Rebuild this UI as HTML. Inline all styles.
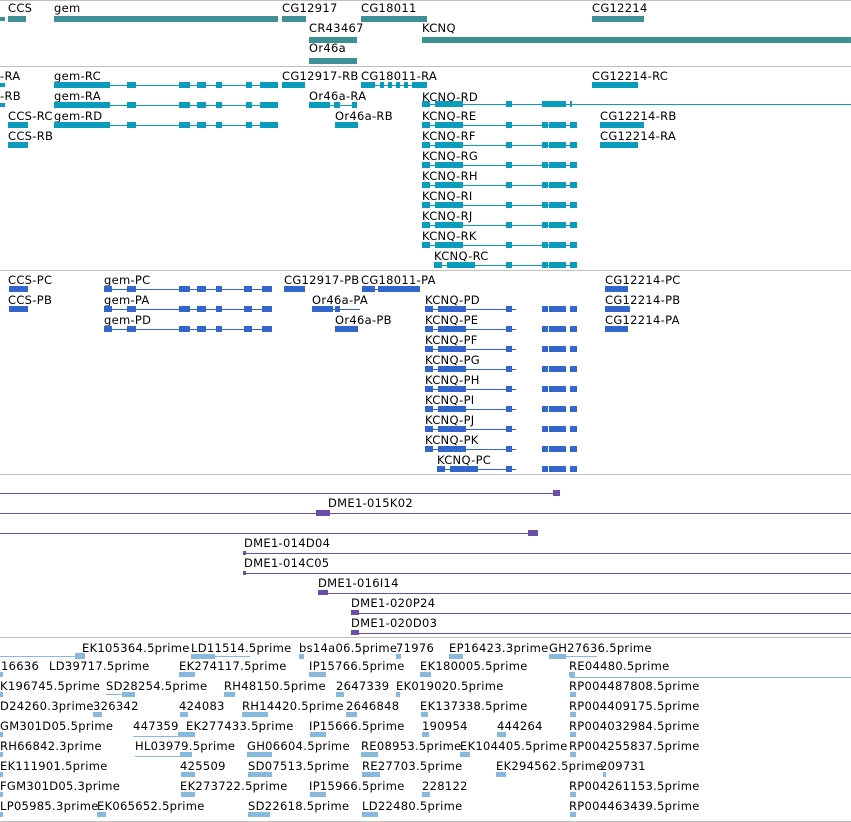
<!DOCTYPE html>
<html><head><meta charset="utf-8"><style>
html,body{margin:0;padding:0;background:#fff;width:851px;height:822px;overflow:hidden;position:relative}
.t{position:absolute;font-family:"DejaVu Sans","Liberation Sans",sans-serif;font-size:11.5px;line-height:13px;color:#000;white-space:nowrap;letter-spacing:0.3px}
.b{position:absolute}
</style></head><body>
<script>
function T(x,y,s){document.write('<div class="t" style="left:'+x+'px;top:'+y+'px">'+s+'</div>');}
function B(x,y,w,h,c){document.write('<div class="b" style="left:'+x+'px;top:'+y+'px;width:'+w+'px;height:'+h+'px;background:'+c+'"></div>');}
function L(x1,x2,y,c){B(x1,y,x2-x1,1,c);}
function EX(arr,y,c,h){h=h||6;arr.forEach(function(e){B(e[0],y-h/2,e[1]-e[0],h,c);});}
var G='#c0c0c0';
// separators
[0,66,270,474,637,821].forEach(function(y){L(0,851,y,G);});
// gene track
var g='#3e8f96';
T(8,2,'CCS');B(0,17,5,4,g);B(8,16,18,6,g);
T(54,2,'gem');B(54,16,224,6,g);
T(282,2,'CG12917');B(282,16,24,6,g);
T(361,2,'CG18011');B(361,16,66,6,g);
T(592,2,'CG12214');B(592,16,52,6,g);
T(309,22,'CR43467');B(309,37,48,6,g);
T(422,22,'KCNQ');B(422,37,429,6,g);
T(309,42,'Or46a');B(309,58,48,6,g);
// transcripts
var c='#0a9cbd';
function gemRow(x0,y,col,x1){L(x0,278,y,col);EX([[x0,x1],[127,136],[179,190],[197,206],[216,222],[246,252],[260,278]],y,col);}
function kcnq(x0,y,col,xe){L(x0,xe,y,col);EX([[x0,x0+8],[x0+13,x0+41],[506,512],[542,548],[549,566],[570,577]],y,col);}
T(0,70,'-RA');B(0,83,5,4,c);
T(54,70,'gem-RC');gemRow(54,85,c,110);
T(282,70,'CG12917-RB');EX([[282,305]],85,c);
T(361,70,'CG18011-RA');L(361,427,85,c);EX([[361,375],[380,384],[388,392],[396,400],[404,408],[412,427]],85,c);
T(592,70,'CG12214-RC');B(592,82,46,6,c);
T(0,90,'-RB');B(0,103,5,4,c);
T(54,90,'gem-RA');gemRow(54,105,c,110);
T(309,90,'Or46a-RA');L(309,357,105,c);EX([[309,330],[334,340],[352,357]],105,c);
T(422,91,'KCNQ-RD');L(422,851,104,c);EX([[422,430],[435,463],[506,512],[542,566],[570,572]],104,c);
T(8,110,'CCS-RC');EX([[8,28]],125,c);
T(54,110,'gem-RD');gemRow(54,125,c,110);
T(335,110,'Or46a-RB');B(335,122,23,6,c);
var ky=[125,145,165,185,205,225,245];var kn=['RE','RF','RG','RH','RI','RJ','RK'];
for(var i=0;i<7;i++){T(422,ky[i]-15,'KCNQ-'+kn[i]);kcnq(422,ky[i],c,577);}
T(434,250,'KCNQ-RC');kcnq(434,265,c,577);
T(600,110,'CG12214-RB');B(600,122,44,6,c);
T(8,130,'CCS-RB');EX([[8,28]],145,c);
T(600,130,'CG12214-RA');B(600,142,38,6,c);
// proteins
var p='#3366cc';
function gemP(y){L(104,272,y,p);EX([[104,112],[127,136],[179,190],[197,206],[216,222],[244,252],[262,272]],y,p);}
T(8,274,'CCS-PC');EX([[9,28]],289,p);
T(104,274,'gem-PC');gemP(289);
T(284,274,'CG12917-PB');EX([[284,305]],289,p);
T(361,274,'CG18011-PA');L(362,420,289,p);EX([[362,375],[378,420]],289,p);
T(605,274,'CG12214-PC');B(605,286,23,6,p);
T(8,294,'CCS-PB');EX([[9,28]],309,p);
T(104,294,'gem-PA');gemP(309);
T(312,294,'Or46a-PA');L(312,360,309,p);EX([[312,333],[335,340]],309,p);
T(605,294,'CG12214-PB');B(605,306,25,6,p);
T(104,314,'gem-PD');gemP(329);
T(335,314,'Or46a-PB');B(335,326,23,6,p);
T(605,314,'CG12214-PA');B(605,326,23,6,p);
var py=[309,329,349,369,389,409,429,449];var pn=['PD','PE','PF','PG','PH','PI','PJ','PK'];
for(var i=0;i<8;i++){T(425,py[i]-15,'KCNQ-'+pn[i]);kcnq(425,py[i],p,516);}
T(437,454,'KCNQ-PC');kcnq(437,469,p,516);
// clones
var v='#6a4fa8';
L(0,556,493,v);B(553,490,7,6,v);
T(328,497,'DME1-015K02');L(0,851,513,v);B(316,510,14,6,v);
L(0,532,533,v);B(528,530,10,6,v);
T(244,537,'DME1-014D04');L(243,851,553,v);B(243,551,3,4,v);
T(244,557,'DME1-014C05');L(243,851,573,v);B(243,571,3,4,v);
T(318,577,'DME1-016I14');L(318,851,593,v);B(318,590,10,5,v);
T(351,597,'DME1-020P24');L(351,851,613,v);B(351,610,8,5,v);
T(351,617,'DME1-020D03');L(351,851,633,v);B(351,630,8,5,v);
// ESTs
var e='#86b9dd';
function R(y,items){items.forEach(function(it){T(it[0],y,it[1]);if(it[2])B(it[2][0],y+12,it[2][1]-it[2][0],5,e);});}
L(0,80,656,e);B(75,653,10,6,e);
R(642,[[82,'EK105364.5prime'],[191,'LD11514.5prime',[191,215]],[299,'bs14a06.5prime',[299,304]],[396,'71976',[396,401]],[449,'EP16423.3prime',[449,463]],[549,'GH27636.5prime',[549,566]]]);
L(191,250,656,e);L(566,597,656,e);
L(570,851,677,e);
R(660,[[1,'16636',[0,3]],[49,'LD39717.5prime'],[179,'EK274117.5prime',[179,195]],[309,'IP15766.5prime',[309,326]],[420,'EK180005.5prime',[420,431]],[569,'RE04480.5prime',[569,575]]]);
R(680,[[0,'K196745.5prime',[0,3]],[106,'SD28254.5prime',[122,135]],[224,'RH48150.5prime',[224,235]],[336,'2647339',[336,344]],[396,'EK019020.5prime',[396,400]],[569,'RP004487808.5prime',[570,576]]]);
L(106,135,694,e);
R(700,[[0,'D24260.3prime'],[93,'326342',[93,102]],[179,'424083',[180,188]],[242,'RH14420.5prime',[242,268]],[346,'2646848',[346,357]],[420,'EK137338.5prime',[421,428]],[569,'RP004409175.5prime',[570,576]]]);
R(720,[[0,'GM301D05.5prime',[0,3]],[133,'447359',[178,195]],[186,'EK277433.5prime'],[309,'IP15666.5prime',[310,326]],[422,'190954',[422,429]],[497,'444264',[497,506]],[569,'RP004032984.5prime',[570,576]]]);
L(133,195,736,e);
R(740,[[0,'RH66842.3prime',[0,3]],[135,'HL03979.5prime',[180,192]],[247,'GH06604.5prime',[247,272]],[361,'RE08953.5prime',[361,378]],[460,'EK104405.5prime',[460,470]],[569,'RP004255837.5prime',[570,576]]]);
L(135,192,756,e);
R(760,[[0,'EK111901.5prime',[0,3]],[180,'425509',[181,195]],[248,'SD07513.5prime',[248,272]],[362,'RE27703.5prime',[362,380]],[496,'EK294562.5prime',[496,506]],[600,'209731',[603,606]]]);
R(780,[[0,'FGM301D05.3prime',[0,3]],[180,'EK273722.5prime',[181,195]],[309,'IP15966.5prime',[310,326]],[422,'228122',[422,430]],[569,'RP004261153.5prime',[570,576]]]);
R(800,[[0,'LP05985.3prime',[0,3]],[97,'EK065652.5prime',[97,106]],[248,'SD22618.5prime',[248,270]],[362,'LD22480.5prime',[362,378]],[569,'RP004463439.5prime',[570,576]]]);
</script>
</body></html>
